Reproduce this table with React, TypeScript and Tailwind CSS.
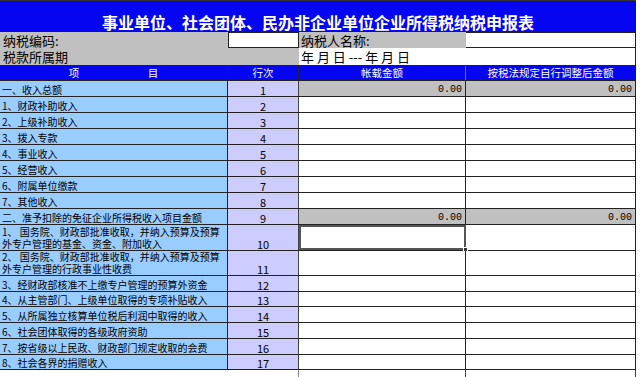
const font = { fontFamily: '"Noto Sans CJK SC", "Noto Sans", sans-serif' }
const mono = { fontFamily: '"Liberation Mono", monospace' }

type Row = { label: string[]; no: number; h: string; sum?: boolean; sel?: boolean }

const rows: Row[] = [
  { label: ['一、收入总额'], no: 1, h: 'h-[16px]', sum: true },
  { label: ['1、财政补助收入'], no: 2, h: 'h-[16px]' },
  { label: ['2、上级补助收入'], no: 3, h: 'h-[16px]' },
  { label: ['3、拨入专款'], no: 4, h: 'h-[16px]' },
  { label: ['4、事业收入'], no: 5, h: 'h-[16px]' },
  { label: ['5、经营收入'], no: 6, h: 'h-[16px]' },
  { label: ['6、附属单位缴款'], no: 7, h: 'h-[16px]' },
  { label: ['7、其他收入'], no: 8, h: 'h-[16px]' },
  { label: ['二、准予扣除的免征企业所得税收入项目金额'], no: 9, h: 'h-[16px]', sum: true },
  { label: ['1、 国务院、财政部批准收取，并纳入预算及预算', '外专户管理的基金、资金、附加收入'], no: 10, h: 'h-[26px]', sel: true },
  { label: ['2、 国务院、财政部批准收取，并纳入预算及预算', '外专户管理的行政事业性收费'], no: 11, h: 'h-[25px]' },
  { label: ['3、经财政部核准不上缴专户管理的预算外资金'], no: 12, h: 'h-[16px]' },
  { label: ['4、从主管部门、上级单位取得的专项补贴收入'], no: 13, h: 'h-[15px]' },
  { label: ['5、从所属独立核算单位税后利润中取得的收入'], no: 14, h: 'h-[16px]' },
  { label: ['6、社会团体取得的各级政府资助'], no: 15, h: 'h-[16px]' },
  { label: ['7、按省级以上民政、财政部门规定收取的会费'], no: 16, h: 'h-[16px]' },
  { label: ['8、社会各界的捐赠收入'], no: 17, h: 'h-[15px]' },
]

const grid = 'grid grid-cols-[228px_71px_167px_170px] w-[636px]'

export default function App() {
  return (
    <div className="w-[640px] h-[377px] overflow-hidden bg-white text-black" style={font}>
      <div className="w-[636px] h-[32px] bg-[#0505f2] border-t border-[#333] flex items-end justify-center pb-[2px]">
        <span className="text-[16px] font-bold text-white leading-none">
          事业单位、社会团体、民办非企业单位企业所得税纳税申报表
        </span>
      </div>

      <div className={`${grid} h-[16px] text-[13px] leading-[14px]`}>
        <div className="bg-[#c0c0c0] flex items-end pl-[3px] whitespace-nowrap">纳税编码:</div>
        <div className="bg-white border border-[#222]" />
        <div className="bg-[#c0c0c0] flex items-end pl-[2px] whitespace-nowrap">纳税人名称:</div>
        <div className="bg-white border-y border-r border-[#222]" />
      </div>

      <div className={`${grid} h-[17px] text-[13px] leading-[14px]`}>
        <div className="col-span-2 bg-[#c0c0c0] flex items-end pl-[3px] pb-[1px]">税款所属期</div>
        <div className="col-span-2 bg-white border-r border-[#222] flex items-end pl-[2px] pb-[1px] whitespace-pre">年 月 日 --- 年 月 日</div>
      </div>

      <div className={`${grid} h-[16px] bg-[#0505f2] text-white text-[10.5px] leading-none border-y border-[#222]`}>
        <div className="flex items-center justify-evenly border-r border-[#222]">
          <span>项</span>
          <span>目</span>
        </div>
        <div className="flex items-center justify-center border-r border-[#222]">行次</div>
        <div className="flex items-center justify-center border-r border-[#6b6bd8]">帐载金额</div>
        <div className="flex items-center justify-center border-r border-[#222]">按税法规定自行调整后金额</div>
      </div>

      {rows.map(r => (
        <div key={r.no} className={`${grid} ${r.h} border-b border-[#222] text-[10px] leading-[12px]`}>
          <div className="bg-[#99ccff] border-r border-[#222] flex flex-col justify-end pl-[2px] whitespace-nowrap">
            {r.label.map(l => (
              <span key={l}>{l}</span>
            ))}
          </div>
          <div className="bg-[#ccccff] border-r border-[#444] flex items-end justify-center text-[11px]">{r.no}</div>
          {r.sum ? (
            <>
              <div className="bg-[#c0c0c0] border-r border-[#222] flex items-end justify-end pr-[3px] text-[10px]" style={mono}>0.00</div>
              <div className="bg-[#c0c0c0] border-r border-[#222] flex items-end justify-end pr-[3px] text-[10px]" style={mono}>0.00</div>
            </>
          ) : (
            <>
              <div className={`bg-white relative ${r.sel ? 'border-2 border-[#555]' : 'border-r border-[#222]'}`}>
                {r.sel && <span className="absolute -right-[4px] -bottom-[4px] w-[5px] h-[5px] bg-[#333] border border-white" />}
              </div>
              <div className="bg-white border-r border-[#222]" />
            </>
          )}
        </div>
      ))}

      <div className={`${grid} h-[10px]`}>
        <div />
        <div className="border-r border-[#888]" />
        <div className="border-r border-[#444]" />
        <div className="border-r border-[#444]" />
      </div>
    </div>
  )
}
